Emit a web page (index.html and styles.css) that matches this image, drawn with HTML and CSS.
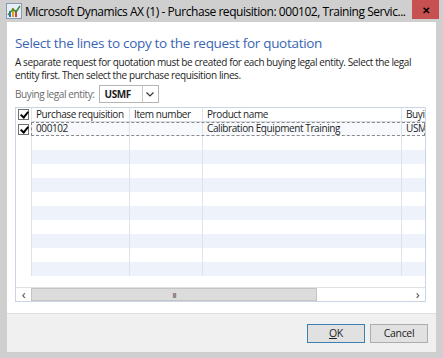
FILE: index.html
```html
<html lang="en">
<head>
  <meta charset="UTF-8">
  <title>Purchase requisition</title>
  <link rel="stylesheet" href="styles.css">
</head>
<body>
  <div class="window">
    <div class="titlebar">
      <svg class="appicon" width="16" height="16" viewBox="0 0 16 16">
        <rect x="0.5" y="0.5" width="15" height="15" fill="#e8eef6" stroke="#8a9bb0"/>
        <rect x="3" y="8" width="2" height="6" fill="#2f6fd0"/>
        <rect x="6" y="5" width="2" height="9" fill="#e0a020"/>
        <rect x="9" y="7" width="2" height="7" fill="#d04040"/>
        <path d="M2 12 L7 6 L10 9 L14 3" stroke="#3a8a3a" stroke-width="1.5" fill="none"/>
      </svg>
      <span class="title">Microsoft Dynamics AX (1) - Purchase requisition: 000102, Training Servic...</span>
      <div class="close">&#x2715;</div>
    </div>
    <div class="client">
      <div class="content">
        <h1 class="heading">Select the lines to copy to the request for quotation</h1>
        <p class="info">A separate request for quotation must be created for each buying legal entity. Select the legal entity first. Then select the purchase requisition lines.</p>
        <div class="field">
          <span class="label">Buying legal entity:</span>
          <div class="combo">
            <span class="combo-value">USMF</span>
            <span class="combo-btn">
              <svg width="8" height="5" viewBox="0 0 8 5"><path d="M0.5 0.5 L4 4 L7.5 0.5" stroke="#333" stroke-width="1.2" fill="none"/></svg>
            </span>
          </div>
        </div>
        <div class="grid">
          <div class="grid-body">
            <div class="checks">
              <div class="chk-cell head"><span class="chk on"></span></div>
              <div class="chk-cell"><span class="chk on"></span></div>
            </div>
            <div class="table">
              <div class="row head">
                <div class="c c1">Purchase requisition</div>
                <div class="c c2">Item number</div>
                <div class="c c3">Product name</div>
                <div class="c c4">Buyi</div>
              </div>
              <div class="row focus">
                <div class="c c1">000102</div>
                <div class="c c2"></div>
                <div class="c c3">Calibration Equipment Training</div>
                <div class="c c4">USM</div>
              </div>
              <div class="row"><div class="c c1"></div><div class="c c2"></div><div class="c c3"></div><div class="c c4"></div></div>
              <div class="row alt"><div class="c c1"></div><div class="c c2"></div><div class="c c3"></div><div class="c c4"></div></div>
              <div class="row"><div class="c c1"></div><div class="c c2"></div><div class="c c3"></div><div class="c c4"></div></div>
              <div class="row alt"><div class="c c1"></div><div class="c c2"></div><div class="c c3"></div><div class="c c4"></div></div>
              <div class="row"><div class="c c1"></div><div class="c c2"></div><div class="c c3"></div><div class="c c4"></div></div>
              <div class="row alt"><div class="c c1"></div><div class="c c2"></div><div class="c c3"></div><div class="c c4"></div></div>
              <div class="row"><div class="c c1"></div><div class="c c2"></div><div class="c c3"></div><div class="c c4"></div></div>
              <div class="row alt"><div class="c c1"></div><div class="c c2"></div><div class="c c3"></div><div class="c c4"></div></div>
              <div class="row"><div class="c c1"></div><div class="c c2"></div><div class="c c3"></div><div class="c c4"></div></div>
              <div class="row alt"><div class="c c1"></div><div class="c c2"></div><div class="c c3"></div><div class="c c4"></div></div>
            </div>
          </div>
          <div class="hscroll">
            <span class="arrow">&lsaquo;</span>
            <div class="track">
              <div class="thumb">III</div>
            </div>
            <span class="arrow">&rsaquo;</span>
          </div>
        </div>
      </div>
      <div class="footer">
        <button class="btn default"><u>O</u>K</button>
        <button class="btn">Cancel</button>
      </div>
    </div>
  </div>
</body>
</html>
```

FILE: styles.css
```css
body {
  margin: 0;
  background-color: #cfcfcf;
  font-family: "Open Sans", "Noto Sans", sans-serif;
  font-size: 10px;
  letter-spacing: -0.4px;
  color: #1e1e1e;
}

.window {
  width: 443px;
  height: 358px;
  display: flex;
  flex-direction: column;
  overflow: hidden;
}

.titlebar {
  height: 22px;
  display: flex;
  align-items: center;
  padding-left: 6px;
}

.appicon {
  flex: none;
  margin-right: 3px;
}

.title {
  flex: none;
  width: 385px;
  font-size: 12px;
  letter-spacing: -0.45px;
  color: #000;
  white-space: nowrap;
  overflow: hidden;
}

.close {
  flex: none;
  width: 27px;
  height: 19px;
  align-self: flex-start;
  margin-left: auto;
  margin-right: 4px;
  background-color: #c75050;
  color: #000;
  font-weight: 700;
  font-size: 10px;
  display: flex;
  align-items: center;
  justify-content: center;
}

.client {
  flex: 1;
  margin: 0 7px 6px 7px;
  background-color: #fff;
  display: flex;
  flex-direction: column;
}

.content {
  flex: 1;
  padding: 0 11px 0 8px;
}

.heading {
  margin: 12px 0 0 0;
  font-weight: 400;
  font-size: 13.5px;
  letter-spacing: -0.3px;
  line-height: 18px;
  color: #3a65b4;
}

.info {
  margin: 4px 0 0 0;
  line-height: 13px;
}

.field {
  display: flex;
  align-items: center;
  margin-top: 3px;
}

.label {
  color: #6a6a6a;
  margin-right: 4px;
}

.combo {
  display: flex;
  width: 58px;
  height: 16px;
  border: 1px solid #b5b5b5;
}

.combo-value {
  flex: 1;
  padding-left: 5px;
  font-weight: 700;
  line-height: 16px;
}

.combo-btn {
  width: 15px;
  border-left: 1px solid #c8c8c8;
  display: flex;
  align-items: center;
  justify-content: center;
}

.grid {
  margin-top: 4px;
  width: 409px;
  border: 1px solid #c9d5e5;
}

.grid-body {
  display: flex;
  height: 179px;
  overflow: hidden;
}

.checks {
  width: 15px;
  flex: none;
}

.chk-cell {
  height: 14px;
  display: flex;
  align-items: center;
  justify-content: center;
}

.chk-cell.head {
  height: 13px;
  margin-bottom: 1px;
}

.chk {
  width: 9px;
  height: 9px;
  border: 1px solid #707070;
  background-color: #fff;
  position: relative;
}

.chk.on::after {
  content: "";
  position: absolute;
  left: 3px;
  top: 0px;
  width: 3px;
  height: 6px;
  border: solid #000;
  border-width: 0 2px 2px 0;
  transform: rotate(40deg);
}

.table {
  flex: 1;
  overflow: hidden;
}

.row {
  display: flex;
  height: 14px;
  line-height: 13px;
}

.row.head {
  height: 13px;
  border-bottom: 1px solid #d8dde5;
}

.row.alt {
  background-color: #eef3fb;
}

.row.focus {
  outline: 1px dashed #8a8a8a;
  outline-offset: -1px;
  background-color: #f7f9fc;
}

.c {
  flex: none;
  padding-left: 4px;
  border-left: 1px solid #dde3ec;
  white-space: nowrap;
  overflow: hidden;
  box-sizing: border-box;
}

.c1 { width: 98px; }
.c2 { width: 73px; }
.c3 { width: 199px; }
.c4 { width: 30px; }

.hscroll {
  display: flex;
  height: 13px;
  border-top: 1px solid #e0e0e0;
}

.arrow {
  width: 15px;
  text-align: center;
  font-size: 13px;
  line-height: 12px;
  color: #444;
}

.track {
  flex: 1;
  display: flex;
}

.thumb {
  width: 286px;
  background-color: #dcdcdc;
  border: 1px solid #c4c4c4;
  box-sizing: border-box;
  font-size: 8px;
  text-align: center;
  line-height: 11px;
  color: #555;
  letter-spacing: -1px;
}

.footer {
  height: 38px;
  background-color: #f0f0f0;
  border-top: 1px solid #dfdfdf;
  display: flex;
  justify-content: flex-end;
  align-items: center;
  gap: 5px;
  padding-right: 8px;
}

.btn {
  width: 58px;
  height: 19px;
  padding: 0;
  font-family: "Open Sans", "Noto Sans", sans-serif;
  font-size: 10.5px;
  letter-spacing: -0.3px;
  color: #1e1e1e;
  background-color: #e1e1e1;
  border: 1px solid #adadad;
}

.btn.default {
  border-color: #3c7fb1;
}
```
